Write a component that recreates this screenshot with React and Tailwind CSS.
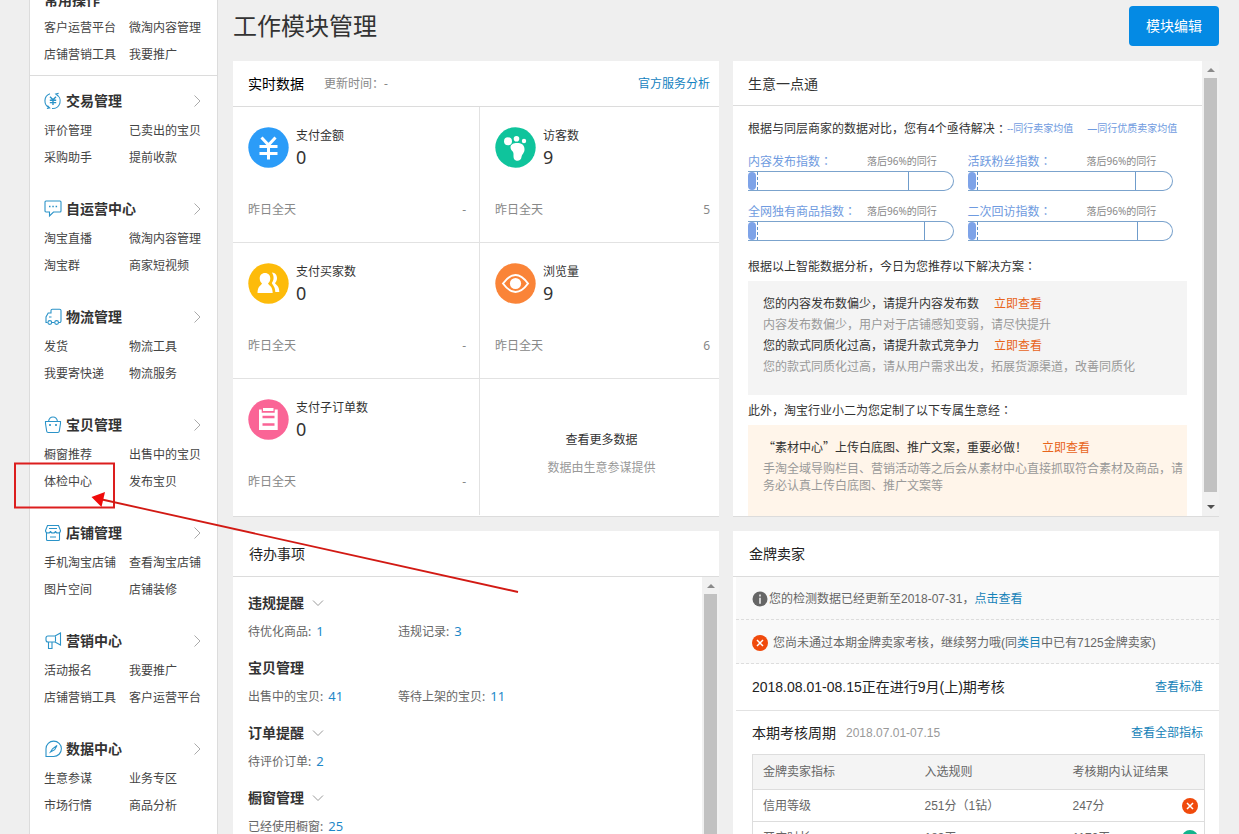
import React from 'react';

const menuGroups = [
    { title: '交易管理', icon: 'trade', links: ['评价管理', '已卖出的宝贝', '采购助手', '提前收款'] },
    { title: '自运营中心', icon: 'chat', links: ['淘宝直播', '微淘内容管理', '淘宝群', '商家短视频'] },
    { title: '物流管理', icon: 'truck', links: ['发货', '物流工具', '我要寄快递', '物流服务'] },
    { title: '宝贝管理', icon: 'bag', links: ['橱窗推荐', '出售中的宝贝', '体检中心', '发布宝贝'] },
    { title: '店铺管理', icon: 'shop', links: ['手机淘宝店铺', '查看淘宝店铺', '图片空间', '店铺装修'] },
    { title: '营销中心', icon: 'horn', links: ['活动报名', '我要推广', '店铺营销工具', '客户运营平台'] },
    { title: '数据中心', icon: 'compass', links: ['生意参谋', '业务专区', '市场行情', '商品分析'] },
];

const stats = [
    { label: '支付金额', value: '0', yesterday: '-', icon: 'yen' },
    { label: '访客数', value: '9', yesterday: '5', icon: 'foot' },
    { label: '支付买家数', value: '0', yesterday: '-', icon: 'users' },
    { label: '浏览量', value: '9', yesterday: '6', icon: 'eye' },
    { label: '支付子订单数', value: '0', yesterday: '-', icon: 'order' },
];

const indexes = [
    { label: '内容发布指数', mark: 78 },
    { label: '活跃粉丝指数', mark: 82 },
    { label: '全网独有商品指数', mark: 86 },
    { label: '二次回访指数', mark: 83 },
];

const todos = [
    { title: '违规提醒', fold: true, items: [['待优化商品', 1], ['违规记录', 3]] },
    { title: '宝贝管理', fold: false, items: [['出售中的宝贝', 41], ['等待上架的宝贝', 11]] },
    { title: '订单提醒', fold: true, items: [['待评价订单', 2]] },
    { title: '橱窗管理', fold: true, items: [['已经使用橱窗', 25]] },
];

const menuIcons = {
    trade: (
        <>
            <path d="M6 1.8A7.5 7.5 0 0 0 5.5 15.8M3.5 13.6l2.2 2.3-2.8.6M8 16.5A7.5 7.5 0 0 0 12 2.3M14.5 4.3 11.8 2l2.8-.6" />
            <path d="M6 4.8l3 3 3-3M5.8 8.2h6.4M5.8 10.6h6.4M9 8v5" strokeWidth="1.4" />
        </>
    ),
    chat: (
        <>
            <path d="M2 1h14a1 1 0 0 1 1 1v9a1 1 0 0 1-1 1H9.500L5.500 16v-4H2a1 1 0 0 1-1-1V2a1 1 0 0 1 1-1z" />
            <path d="M5 6.500h1.500M8.300 6.500h1.500M11.600 6.500h1.500" strokeWidth="1.4" />
        </>
    ),
    truck: (
        <>
            <path d="M3.5 14.5H2V9l2.2-4H7V2.6A1.4 1.4 0 0 1 8.4 1.2h7.2A1.4 1.4 0 0 1 17 2.6v10.5a1.4 1.4 0 0 1-1.4 1.4h-.6M8 14.5h2.5M5 9h2.5" />
            <circle cx="5.8" cy="14.5" r="1.9" />
            <circle cx="12.6" cy="14.5" r="1.9" />
        </>
    ),
    bag: (
        <>
            <path d="M1.500 5.500h15v2l-1.200 7.700a1.500 1.500 0 0 1-1.500 1.300H4.200a1.500 1.500 0 0 1-1.500-1.300L1.500 7.500zM4.500 5.500C5 2.500 6.500 1 9 1s4 1.500 4.500 4.500" />
            <path d="M6 8v2M12 8v2" strokeWidth="1.6" />
        </>
    ),
    shop: (
        <path d="M3.500 1.500h11l2 5c0 1.800-1 2.500-2.500 2.500s-2.500-1-2.500-2c0 1-1 2-2.500 2s-2.500-1-2.500-2c0 1-1 2-2.500 2S1.500 8.300 1.500 6.500zM2.500 9v6.500a1 1 0 0 0 1 1h11a1 1 0 0 0 1-1V9M5 4.500h8M6 13h6" />
    ),
    horn: (
        <path d="M4 4h7l5.500-3v12L11 10H4a2 2 0 0 1-2-2V6a2 2 0 0 1 2-2zM4.500 10v6.500H8V10M11.500 4.500v5" />
    ),
    compass: (
        <>
            <path d="M2 16.500V8.800a7.700 7.700 0 1 1 7.700 7.700z" />
            <path d="M6.500 12l2-3.200L13 5.500l-2.300 4.200z" />
        </>
    ),
};

function MenuIcon({ name }) {
    return (
        <svg className="size-[18px] shrink-0" viewBox="0 0 18 18" fill="none" stroke="#2b93c8" strokeWidth="1.1">
            {menuIcons[name]}
        </svg>
    );
}

const statIcons = {
    yen: (
        <>
            <circle cx="20.5" cy="20.5" r="20.2" fill="#2b9cf8" />
            <path d="M13.500 10.500l7 7.500 7-7.500M11.500 19.500h18M11.500 26.500h18M20.500 18v14.500" fill="none" stroke="#fff" strokeWidth="3" />
        </>
    ),
    foot: (
        <>
            <circle cx="20.5" cy="20.5" r="20.2" fill="#0fc49c" />
            <g fill="#fff">
                <circle cx="13" cy="14.3" r="4" />
                <circle cx="21.5" cy="11.8" r="2.8" />
                <circle cx="29" cy="14" r="2.2" />
                <path d="M15.500 20c0-3 4-4.500 8-4 4 .3 6 3 6 6.500s-2.500 4.500-3 7.500c-.4 3-2.500 4.200-5 3.700-3.200-.6-3-3.700-3-6.700 0-3.500-3-3-3-7z" />
            </g>
        </>
    ),
    users: (
        <>
            <circle cx="20.5" cy="20.5" r="20.2" fill="#fdbb0a" />
            <g fill="#fff">
                <path d="M17 10c3.300 0 5.300 2.300 5.300 5.500 0 2.300-1 4-2.300 5 .5 1.700 4.700 2.500 4.700 9.500H9.500c0-7 4-7.800 4.500-9.500-1.300-1-2.300-2.700-2.300-5 0-3.200 2-5.500 5.300-5.500z" />
                <path d="M23.800 9.500c3.500.2 5.200 2.600 5.200 5.500 0 2.500-1 4-2 5 .6 1.800 4.300 2.500 4.300 9h-4c-.2-5.500-2.800-7-3.500-9 2.500-3 2.300-7.500 0-10.500z" />
            </g>
        </>
    ),
    eye: (
        <>
            <circle cx="20.5" cy="20.5" r="20.2" fill="#fa8438" />
            <path d="M8 20.500Q20.500 3.500 33 20.500Q20.500 37.500 8 20.500z" fill="none" stroke="#fff" strokeWidth="2" />
            <circle cx="20.5" cy="20.5" r="5.6" fill="#fff" />
        </>
    ),
    order: (
        <>
            <circle cx="20.5" cy="20.5" r="20.2" fill="#fa6496" />
            <path d="M11 10.500h2.700v3.200h13v-3.200h3V31H11z" fill="#fff" />
            <path d="M15 9h10.500v3H15z" fill="#fff" />
            <path d="M14.500 18h12M14.500 25.500h12" stroke="#fa6496" strokeWidth="2.6" />
        </>
    ),
};

function StatIcon({ name }) {
    return <svg className="size-[41px] shrink-0" viewBox="0 0 41 41">{statIcons[name]}</svg>;
}

function Bad() {
    return (
        <svg className="size-4 shrink-0" viewBox="0 0 16 16">
            <circle cx="8" cy="8" r="8" fill="#f04a0c" />
            <path d="M5 5l6 6M11 5l-6 6" stroke="#fff" strokeWidth="1.5" />
        </svg>
    );
}

function Good() {
    return (
        <svg className="size-4 shrink-0" viewBox="0 0 16 16">
            <circle cx="8" cy="8" r="8" fill="#12b48c" />
            <path d="M4.500 8l2.500 2.500 4.500-5" fill="none" stroke="#fff" strokeWidth="1.5" />
        </svg>
    );
}

// full-width colon, centred in its box
function Colon() {
    return <span className="leading-none font-['Noto_Sans_CJK_JP',sans-serif]">：</span>;
}

function ScrollBar() {
    return (
        <div className="w-[17px] shrink-0 bg-[#f1f1f1] flex flex-col items-center">
            <svg className="h-[17px] w-2 shrink-0" viewBox="0 0 8 17"><path d="M0 11l4-4 4 4z" fill="#8a8a8a" /></svg>
            <div className="w-[13px] flex-1 bg-[#c1c1c1]" />
            <svg className="h-6 w-2 shrink-0" viewBox="0 0 8 24"><path d="M0 13l4 4 4-4z" fill="#505050" /></svg>
        </div>
    );
}

function MenuLinks({ links }) {
    return (
        <ul className="grid grid-cols-[85px_1fr]">
            {links.map((link) => (
                <li key={link} className="h-[27px] leading-[27px] whitespace-nowrap">
                    <a href="#">{link}</a>
                </li>
            ))}
        </ul>
    );
}

function Sidebar() {
    return (
        <aside className="w-[189px] shrink-0 bg-white border-x border-[#dcdcdc] text-[#444]">
            <div className="-mt-[18px] pl-[14px] pb-[7px] border-b border-[#dcdcdc]">
                <h3 className="h-8 leading-9 text-sm font-bold text-[#333]">常用操作</h3>
                <MenuLinks links={['客户运营平台', '微淘内容管理', '店铺营销工具', '我要推广']} />
            </div>
            <nav className="pt-[9px] pl-[14px]">
                {menuGroups.map((group) => (
                    <section key={group.title} className="pb-[22px]">
                        <div className="h-8 flex items-center pr-4">
                            <MenuIcon name={group.icon} />
                            <h3 className="ml-1 flex-1 text-sm font-bold text-[#333]">{group.title}</h3>
                            <svg className="h-3 w-2" viewBox="0 0 8 12" fill="none" stroke="#aaa">
                                <path d="M1.500 .5L7 6l-5.500 5.500" />
                            </svg>
                        </div>
                        <MenuLinks links={group.links} />
                    </section>
                ))}
            </nav>
        </aside>
    );
}

function RealtimeCard() {
    return (
        <section className="bg-white border-b border-[#dcdcdc]">
            <header className="h-[46px] pl-[15px] pr-[9px] flex items-center border-b border-[#dcdcdc]">
                <h2 className="text-sm text-black">实时数据</h2>
                <span className="ml-5 text-[#888]">更新时间：-</span>
                <a href="#" className="ml-auto text-[#1482c0]">官方服务分析</a>
            </header>
            <div className="grid grid-cols-[247fr_239fr]">
                {stats.map((stat) => (
                    <div key={stat.label} className="h-[136px] pt-5 pl-[15px] pr-[9px] odd:pr-[13px] odd:border-r border-b nth-[5]:border-b-0 border-[#e2e2e2]">
                        <div className="flex gap-[7px]">
                            <StatIcon name={stat.icon} />
                            <div>
                                <p className="leading-[18px] text-[#333]">{stat.label}</p>
                                <p className="text-lg leading-6 text-[#333]">{stat.value}</p>
                            </div>
                        </div>
                        <p className="mt-8 leading-[18px] flex justify-between text-[#888]">
                            <span>昨日全天</span>
                            <span>{stat.yesterday}</span>
                        </p>
                    </div>
                ))}
                <div className="pt-[47px] pl-1 leading-7 text-center">
                    <a href="#" className="block text-[#333]">查看更多数据</a>
                    <p className="text-[#999]">数据由生意参谋提供</p>
                </div>
            </div>
        </section>
    );
}

function IndexBar({ label, mark }) {
    return (
        <div className="h-[50px] pr-[14px]">
            <div className="h-5 pt-px flex items-center">
                <span className="w-[119px] text-[#6f9be0]">{label}<Colon /></span>
                <span className="text-[10px] text-[#888]">落后96%的同行</span>
            </div>
            <div className="relative h-5 border border-l-0 border-[#7ba3cd] rounded-l-sm rounded-r-full">
                <div className="h-full w-[10px] border-r border-dashed border-[#5f8fc8]">
                    <div className="h-full w-2 rounded-sm bg-[#7ea3e8]" />
                </div>
                <div className="absolute inset-y-0 w-px bg-[#6f9ccb]" style={{ left: `${mark}%` }} />
            </div>
        </div>
    );
}

function BusinessCard() {
    return (
        <section className="bg-white border-b border-[#dcdcdc] flex">
            <div className="flex-1 min-w-0 flex flex-col">
                <h2 className="h-[45px] pl-[15px] leading-[46px] text-sm text-[#333] border-b border-[#dcdcdc]">生意一点通</h2>
                <div className="flex-1 flex flex-col px-[15px] pt-[13px] text-[#333]">
                    <p className="h-5 flex items-center whitespace-nowrap">
                        根据与同层商家的数据对比，您有4个亟待解决<Colon />
                        <span className="text-[10px] text-[#6f9be0]">--同行卖家均值</span>
                        <span className="ml-[14px] text-[10px] text-[#6f9be0]">—同行优质卖家均值</span>
                    </p>
                    <div className="mt-3 grid grid-cols-2">
                        {indexes.map((item) => <IndexBar key={item.label} {...item} />)}
                    </div>
                    <p className="mt-[6px] h-5 leading-5">根据以上智能数据分析，今日为您推荐以下解决方案<Colon /></p>
                    <div className="mt-1 h-[114px] px-[15px] pt-3 bg-[#f4f4f4] leading-[21px]">
                        <p>您的内容发布数偏少，请提升内容发布数<a href="#" className="ml-[15px] text-[#e8641b]">立即查看</a></p>
                        <p className="text-[#999]">内容发布数偏少，用户对于店铺感知变弱，请尽快提升</p>
                        <p>您的款式同质化过高，请提升款式竞争力<a href="#" className="ml-[15px] text-[#e8641b]">立即查看</a></p>
                        <p className="text-[#999]">您的款式同质化过高，请从用户需求出发，拓展货源渠道，改善同质化</p>
                    </div>
                    <p className="mt-[6px] h-5 leading-5">此外，淘宝行业小二为您定制了以下专属生意经<Colon /></p>
                    <div className="mt-1 flex-1 pl-[15px] pt-[11px] bg-[#fff5ea] font-['Noto_Sans_CJK_SC',sans-serif]">
                        <p className="leading-[21px]">“素材中心”上传白底图、推广文案，重要必做！<a href="#" className="ml-[15px] text-[#e8641b]">立即查看</a></p>
                        <p className="mt-[2px] leading-[17px] text-[#999]">手淘全域导购栏目、营销活动等之后会从素材中心直接抓取符合素材及商品，请务必认真上传白底图、推广文案等</p>
                    </div>
                </div>
            </div>
            <ScrollBar />
        </section>
    );
}

function TodoCard() {
    return (
        <section className="bg-white flex flex-col">
            <h2 className="h-[46px] pl-4 leading-[46px] text-sm text-[#222] border-b border-[#dcdcdc]">待办事项</h2>
            <div className="flex-1 flex">
                <div className="flex-1 pt-4 pl-[15px]">
                    {todos.map((todo) => (
                        <div key={todo.title} className="pb-4">
                            <h3 className="h-5 flex items-center gap-2 text-sm font-bold text-[#333]">
                                {todo.title}
                                {todo.fold && (
                                    <svg className="h-[7px] w-3" viewBox="0 0 12 7" fill="none" stroke="#999">
                                        <path d="M1 .5l5 5 5-5" />
                                    </svg>
                                )}
                            </h3>
                            <div className="mt-[9px] h-5 flex items-center text-[#666]">
                                {todo.items.map(([name, count]) => (
                                    <p key={name} className="w-[150px]">
                                        {name}: <a href="#" className="ml-[2px] text-[13px] text-[#1e88c8]">{count}</a>
                                    </p>
                                ))}
                            </div>
                        </div>
                    ))}
                </div>
                <ScrollBar />
            </div>
        </section>
    );
}

function GoldSellerCard() {
    return (
        <section className="bg-white pb-6 font-['Liberation_Sans','Noto_Sans_CJK_SC',sans-serif] text-[#666]">
            <h2 className="h-[46px] pl-4 leading-[46px] text-sm text-[#222] border-b border-[#dcdcdc]">金牌卖家</h2>
            <div className="pl-[3px]">
                <div className="h-[43px] pl-4 pt-[2px] flex items-center bg-[#f9f9f9] border-b border-dashed border-[#ddd]">
                    <svg className="size-4 shrink-0 mr-px" viewBox="0 0 16 16">
                        <circle cx="8" cy="8" r="7.5" fill="#666" />
                        <path d="M8 3.500v2M8 6.800v6" stroke="#ddd" strokeWidth="1.8" />
                    </svg>
                    <p>您的检测数据已经更新至2018-07-31，<a href="#" className="text-[#1482b8]">点击查看</a></p>
                </div>
                <div className="h-11 pl-4 pt-[2px] flex items-center gap-[5px] bg-[#f9f9f9] border-b border-dashed border-[#ddd]">
                    <Bad />
                    <p>您尚未通过本期金牌卖家考核，继续努力哦(同<a href="#" className="text-[#1482b8]">类目</a>中已有7125金牌卖家)</p>
                </div>
                <div className="h-[47px] pl-4 pr-4 flex items-center justify-between border-b border-[#e2e2e2]">
                    <h3 className="text-sm text-[#222]">2018.08.01-08.15正在进行9月(上)期考核</h3>
                    <a href="#" className="text-[#1482b8]">查看标准</a>
                </div>
                <div className="h-[43px] pl-4 pr-4 flex items-center">
                    <h3 className="text-sm text-[#222]">本期考核周期</h3>
                    <span className="ml-[10px] text-[#999]">2018.07.01-07.15</span>
                    <a href="#" className="ml-auto text-[#1482b8]">查看全部指标</a>
                </div>
                <div className="pl-4 pr-[14px]">
                    <table className="w-full table-fixed border-collapse border border-[#ddd] text-left">
                        <thead>
                            <tr className="h-[35px] bg-[#f4f4f4] border-b border-[#ddd]">
                                <th className="w-[162px] pl-[10px] font-normal">金牌卖家指标</th>
                                <th className="w-[148px] pl-[10px] font-normal">入选规则</th>
                                <th className="pl-[10px] font-normal">考核期内认证结果</th>
                            </tr>
                        </thead>
                        <tbody>
                            <tr className="h-8 border-b border-[#ddd]">
                                <td className="pl-[10px]">信用等级</td>
                                <td className="pl-[10px]">251分（1钻）</td>
                                <td className="pl-[10px] pr-[6px]"><div className="flex items-center justify-between">247分<Bad /></div></td>
                            </tr>
                            <tr className="h-8 border-b border-[#ddd]">
                                <td className="pl-[10px]">开店时长</td>
                                <td className="pl-[10px]">183天</td>
                                <td className="pl-[10px] pr-[6px]"><div className="flex items-center justify-between">1170天<Good /></div></td>
                            </tr>
                        </tbody>
                    </table>
                </div>
            </div>
        </section>
    );
}

export default function App() {
    return (
        <div className="relative h-screen overflow-hidden flex bg-[#efefef] pl-[29px] pr-5 text-xs font-['Noto_Sans','Noto_Sans_CJK_SC',sans-serif]">
            <Sidebar />
            <main className="flex-1 min-w-0 ml-[15px] pt-[6px]">
                <div className="h-10 mb-[15px] flex items-center justify-between">
                    <h1 className="text-2xl text-[#333]">工作模块管理</h1>
                    <button type="button" className="h-10 w-[90px] rounded-sm bg-[#048ae4] text-sm text-white">模块编辑</button>
                </div>
                <div className="grid grid-cols-2 grid-rows-[456px_auto] gap-[14px]">
                    <RealtimeCard />
                    <BusinessCard />
                    <TodoCard />
                    <GoldSellerCard />
                </div>
            </main>
            {/* hint that points at 体检中心 */}
            <svg className="absolute left-0 top-0 h-[620px] w-[540px] pointer-events-none" viewBox="0 0 540 620">
                <rect x="15" y="463.5" width="99" height="44" fill="none" stroke="#dc1e1e" strokeWidth="2" />
                <path d="M518 592L102 499.500" stroke="#d21a14" strokeWidth="1.8" />
                <path d="M91.500 497l13.500-5-3.500 15z" fill="#f00a0a" />
            </svg>
        </div>
    );
}
